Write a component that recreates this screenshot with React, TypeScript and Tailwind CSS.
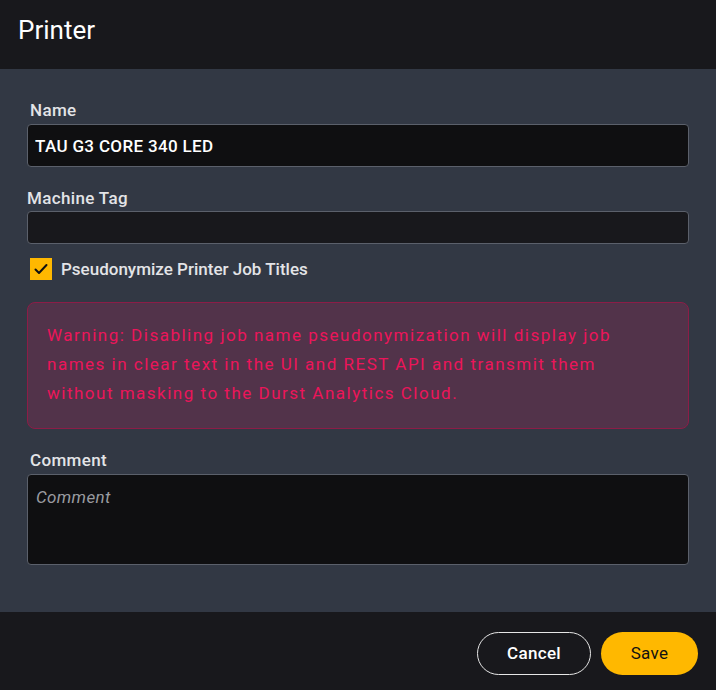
import { useState } from "react";

export default function App() {
    const [name, setName] = useState("TAU G3 CORE 340 LED");
    const [tag, setTag] = useState("");
    const [comment, setComment] = useState("");
    const [pseudo, setPseudo] = useState(true);

    return (
        <div className="w-[716px] h-[690px] flex flex-col bg-[#323844] font-['Roboto',sans-serif] overflow-hidden">
            <div className="h-[69px] shrink-0 bg-[#18181c] flex items-center px-[18px]">
                <h1 className="text-[26px] text-white font-normal leading-none -mt-[9px]">Printer</h1>
            </div>

            <form className="flex-1 flex flex-col px-[27px] pt-[31px]">
                <label htmlFor="name" className="ml-[3px] text-[17px] font-medium tracking-[0.02em] text-[#e3e4e7] leading-[20px] mb-[4px]">
                    Name
                </label>
                <input
                    id="name"
                    value={name}
                    onChange={(e) => setName(e.target.value)}
                    className="h-[43px] w-full rounded-[4px] border border-[#5b606b] bg-[#0f0f11] px-[7px] text-[17px] font-medium tracking-[0.02em] text-white outline-none"
                />

                <label htmlFor="tag" className="mt-[21px] text-[17px] font-medium tracking-[0.02em] text-[#e3e4e7] leading-[20px] mb-[3px]">
                    Machine Tag
                </label>
                <input
                    id="tag"
                    value={tag}
                    onChange={(e) => setTag(e.target.value)}
                    className="h-[33px] w-full rounded-[4px] border border-[#5b606b] bg-[#18181c] px-[7px] text-[17px] text-white outline-none"
                />

                <label className="mt-[14px] ml-[3px] flex items-center gap-[9px] cursor-pointer">
                    <button
                        type="button"
                        onClick={() => setPseudo(!pseudo)}
                        className="w-[22px] h-[22px] bg-[#ffb800] flex items-center justify-center"
                    >
                        {pseudo && (
                            <svg width="16" height="16" viewBox="0 0 16 16" fill="none">
                                <path d="M2.5 8.5 L6 12 L13.5 4" stroke="#111" strokeWidth="2" strokeLinecap="round" strokeLinejoin="round" />
                            </svg>
                        )}
                    </button>
                    <span className="text-[17px] leading-[20px] font-medium text-[#e3e4e7]">Pseudonymize Printer Job Titles</span>
                </label>

                <div className="mt-[22px] h-[127px] rounded-[8px] border border-[#8c1d47] bg-[#52334a] pl-[19px] pr-[40px] pt-[18px]">
                    <p className="text-[17px] leading-[29px] tracking-[1.5px] text-[#ec155a]">
                        Warning: Disabling job name pseudonymization will display job names in clear text in the UI and REST API and transmit them without masking to the Durst Analytics Cloud.
                    </p>
                </div>

                <label htmlFor="comment" className="mt-[21px] ml-[3px] text-[17px] font-medium tracking-[0.02em] text-[#e3e4e7] leading-[20px] mb-[4px]">
                    Comment
                </label>
                <textarea
                    id="comment"
                    placeholder="Comment"
                    value={comment}
                    onChange={(e) => setComment(e.target.value)}
                    className="h-[91px] w-full resize-none rounded-[4px] border border-[#5b606b] bg-[#0f0f11] px-[8px] py-[10px] text-[17px] tracking-[0.02em] text-white outline-none placeholder:italic placeholder:text-[#9a9ba0]"
                />
            </form>

            <div className="h-[78px] shrink-0 bg-[#18181c] flex items-start justify-end gap-[10px] pt-[20px] pr-[18px]">
                <button type="button" className="h-[43px] w-[114px] rounded-full border border-[#e6e6e6] text-[17px] font-medium tracking-[0.02em] text-white">
                    Cancel
                </button>
                <button type="button" className="h-[43px] w-[97px] rounded-full bg-[#ffb800] text-[17px] tracking-[0.02em] text-[#111]">
                    Save
                </button>
            </div>
        </div>
    );
}
